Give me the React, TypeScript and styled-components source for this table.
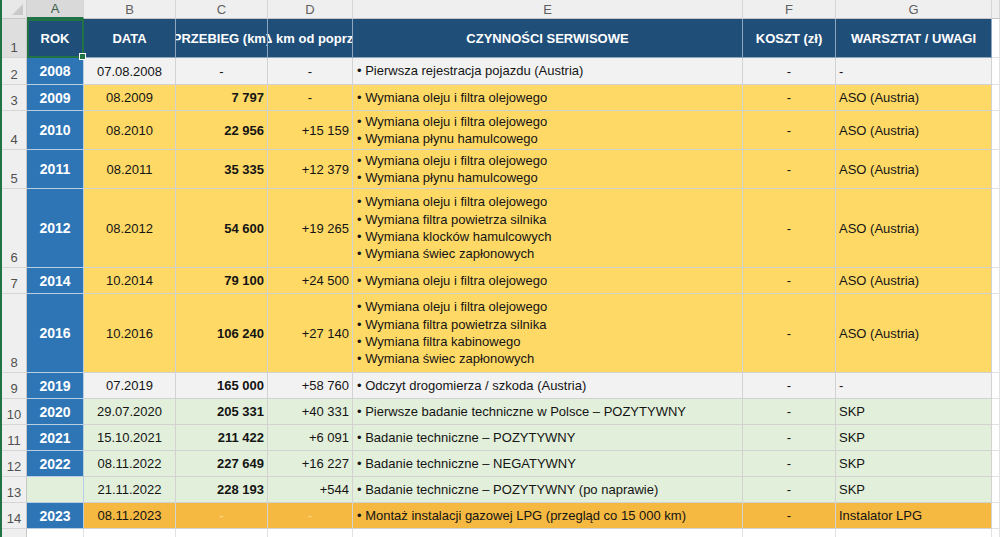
import React from 'react';
import styled, { createGlobalStyle, css } from 'styled-components';

const GlobalStyle = createGlobalStyle`
  html, body {
    margin: 0;
    padding: 0;
    background: #ffffff;
    overflow: hidden;
  }
  body {
    font-family: "Liberation Sans", Arial, sans-serif;
    font-size: 13px;
    color: #141414;
  }
`;

type Tone = 'gray' | 'yellow' | 'green' | 'orange' | 'white';

const toneBg: Record<Tone, string> = {
  gray: '#f2f2f2',
  yellow: '#ffd966',
  green: '#e2efda',
  orange: '#f5b942',
  white: '#ffffff',
};

const Sheet = styled.div`
  display: flex;
  flex-direction: column;
  width: 1000px;
  height: 537px;
  overflow: hidden;
  border-left: 2px solid #217346;
  box-sizing: border-box;
`;

const Row = styled.div<{ $h: number }>`
  display: grid;
  grid-template-columns: 25px 57px 92px 92px 85px 390px 93px 156px 1fr;
  height: ${(p) => p.$h}px;
  flex-shrink: 0;
`;

const Corner = styled.div`
  position: relative;
  background: #e8e8e8;
  border-right: 1px solid #d0d0d0;
  border-bottom: 1px solid #c6c6c6;
  &::after {
    content: '';
    position: absolute;
    right: 3px;
    bottom: 3px;
    border-style: solid;
    border-width: 0 0 11px 11px;
    border-color: transparent transparent #c9c9c9 transparent;
  }
`;

const ColLetter = styled.div<{ $active?: boolean }>`
  display: flex;
  align-items: center;
  justify-content: center;
  background: ${(p) => (p.$active ? '#d9d9d9' : '#efefef')};
  color: ${(p) => (p.$active ? '#3b5e48' : '#5f5f5f')};
  border-right: 1px solid #d6d6d6;
  border-bottom: ${(p) => (p.$active ? '2px solid #217346' : '1px solid #c6c6c6')};
  box-sizing: border-box;
  font-size: 13px;
`;

const RowNum = styled.div<{ $active?: boolean }>`
  display: flex;
  align-items: flex-end;
  justify-content: center;
  padding-bottom: 2px;
  box-sizing: border-box;
  background: ${(p) => (p.$active ? '#dedede' : '#efefef')};
  color: #505050;
  border-bottom: 1px solid #d6d6d6;
  border-right: 1px solid #c6c6c6;
  font-size: 13px;
`;

const cellBase = css`
  display: flex;
  align-items: center;
  box-sizing: border-box;
  border-right: 1px solid #d2d2d2;
  border-bottom: 1px solid #d2d2d2;
  overflow: hidden;
  white-space: nowrap;
  min-width: 0;
`;

const HeadCell = styled.div<{ $selected?: boolean }>`
  ${cellBase};
  position: relative;
  justify-content: center;
  background: #1f4e79;
  color: #ffffff;
  font-weight: bold;
  font-size: 13px;
  border-right-color: #8fa6bf;
  border-bottom-color: #8fa6bf;
  overflow: ${(p) => (p.$selected ? 'visible' : 'hidden')};
  ${(p) =>
    p.$selected &&
    css`
      outline: 2px solid #217346;
      outline-offset: -2px;
      &::after {
        content: '';
        position: absolute;
        right: -3px;
        bottom: -3px;
        width: 5px;
        height: 5px;
        background: #217346;
        border: 1px solid #ffffff;
        z-index: 2;
      }
    `}
`;

const YearCell = styled.div<{ $tone: Tone; $empty?: boolean }>`
  ${cellBase};
  justify-content: center;
  background: ${(p) => (p.$empty ? toneBg[p.$tone] : '#2e75b6')};
  color: #ffffff;
  font-weight: bold;
  font-size: 14px;
  border-right-color: #b9cde3;
  border-bottom-color: #b9cde3;
`;

const Cell = styled.div<{ $tone: Tone; $align?: 'left' | 'center' | 'right'; $bold?: boolean; $faint?: boolean }>`
  ${cellBase};
  background: ${(p) => toneBg[p.$tone]};
  justify-content: ${(p) =>
    p.$align === 'right' ? 'flex-end' : p.$align === 'center' ? 'center' : 'flex-start'};
  padding: 0 3px;
  font-weight: ${(p) => (p.$bold ? 'bold' : 'normal')};
  color: ${(p) => (p.$faint ? '#f9d991' : '#141414')};
  font-size: 13px;
`;

const ItemList = styled.div<{ $tone: Tone }>`
  ${cellBase};
  flex-direction: column;
  align-items: flex-start;
  justify-content: center;
  background: ${(p) => toneBg[p.$tone]};
  padding: 0 4px;
  font-size: 13px;
  line-height: 17.4px;
`;

const BlankCell = styled.div`
  ${cellBase};
  background: #ffffff;
  border-right-color: #e1e1e1;
  border-bottom-color: #e1e1e1;
`;

interface Entry {
  n: number;
  h: number;
  year: string;
  date: string;
  km: string;
  delta: string;
  items: string[];
  cost: string;
  note: string;
  tone: Tone;
}

const oil = 'Wymiana oleju i filtra olejowego';
const brake = 'Wymiana płynu hamulcowego';
const air = 'Wymiana filtra powietrza silnika';
const plugs = 'Wymiana świec zapłonowych';

const entries: Entry[] = [
  { n: 2, h: 27, year: '2008', date: '07.08.2008', km: '-', delta: '-', items: ['Pierwsza rejestracja pojazdu (Austria)'], cost: '-', note: '-', tone: 'gray' },
  { n: 3, h: 26, year: '2009', date: '08.2009', km: '7 797', delta: '-', items: [oil], cost: '-', note: 'ASO (Austria)', tone: 'yellow' },
  { n: 4, h: 39, year: '2010', date: '08.2010', km: '22 956', delta: '+15 159', items: [oil, brake], cost: '-', note: 'ASO (Austria)', tone: 'yellow' },
  { n: 5, h: 39, year: '2011', date: '08.2011', km: '35 335', delta: '+12 379', items: [oil, brake], cost: '-', note: 'ASO (Austria)', tone: 'yellow' },
  { n: 6, h: 79, year: '2012', date: '08.2012', km: '54 600', delta: '+19 265', items: [oil, air, 'Wymiana klocków hamulcowych', plugs], cost: '-', note: 'ASO (Austria)', tone: 'yellow' },
  { n: 7, h: 26, year: '2014', date: '10.2014', km: '79 100', delta: '+24 500', items: [oil], cost: '-', note: 'ASO (Austria)', tone: 'yellow' },
  { n: 8, h: 79, year: '2016', date: '10.2016', km: '106 240', delta: '+27 140', items: [oil, air, 'Wymiana filtra kabinowego', plugs], cost: '-', note: 'ASO (Austria)', tone: 'yellow' },
  { n: 9, h: 26, year: '2019', date: '07.2019', km: '165 000', delta: '+58 760', items: ['Odczyt drogomierza / szkoda (Austria)'], cost: '-', note: '-', tone: 'gray' },
  { n: 10, h: 26, year: '2020', date: '29.07.2020', km: '205 331', delta: '+40 331', items: ['Pierwsze badanie techniczne w Polsce – POZYTYWNY'], cost: '-', note: 'SKP', tone: 'green' },
  { n: 11, h: 26, year: '2021', date: '15.10.2021', km: '211 422', delta: '+6 091', items: ['Badanie techniczne – POZYTYWNY'], cost: '-', note: 'SKP', tone: 'green' },
  { n: 12, h: 26, year: '2022', date: '08.11.2022', km: '227 649', delta: '+16 227', items: ['Badanie techniczne – NEGATYWNY'], cost: '-', note: 'SKP', tone: 'green' },
  { n: 13, h: 26, year: '', date: '21.11.2022', km: '228 193', delta: '+544', items: ['Badanie techniczne – POZYTYWNY (po naprawie)'], cost: '-', note: 'SKP', tone: 'green' },
  { n: 14, h: 26, year: '2023', date: '08.11.2023', km: '-', delta: '-', items: ['Montaż instalacji gazowej LPG (przegląd co 15 000 km)'], cost: '-', note: 'Instalator LPG', tone: 'orange' },
];

const letters = ['A', 'B', 'C', 'D', 'E', 'F', 'G', ''];
const headers = ['ROK', 'DATA', 'PRZEBIEG (km)', 'Δ km od poprz.', 'CZYNNOŚCI SERWISOWE', 'KOSZT (zł)', 'WARSZTAT / UWAGI'];

const EntryRow: React.FC<{ e: Entry }> = ({ e }) => {
  const dash = (v: string) => v === '-';
  return (
    <Row $h={e.h}>
      <RowNum>{e.n}</RowNum>
      <YearCell $tone={e.tone} $empty={!e.year}>{e.year}</YearCell>
      <Cell $tone={e.tone} $align="center">{e.date}</Cell>
      <Cell $tone={e.tone} $align={dash(e.km) ? 'center' : 'right'} $bold={!dash(e.km)} $faint={e.tone === 'orange' && dash(e.km)}>
        {e.km}
      </Cell>
      <Cell $tone={e.tone} $align={dash(e.delta) ? 'center' : 'right'} $faint={e.tone === 'orange' && dash(e.delta)}>
        {e.delta}
      </Cell>
      <ItemList $tone={e.tone}>
        {e.items.map((it) => (
          <span key={it}>• {it}</span>
        ))}
      </ItemList>
      <Cell $tone={e.tone} $align="center">{e.cost}</Cell>
      <Cell $tone={e.tone}>{e.note}</Cell>
      <BlankCell />
    </Row>
  );
};

export default function App() {
  return (
    <>
      <GlobalStyle />
      <Sheet>
        <Row $h={19}>
          <Corner />
          {letters.map((l, i) => (
            <ColLetter key={i} $active={l === 'A'}>{l}</ColLetter>
          ))}
        </Row>
        <Row $h={39}>
          <RowNum $active>1</RowNum>
          {headers.map((h, i) => (
            <HeadCell key={h} $selected={i === 0}>{h}</HeadCell>
          ))}
          <BlankCell />
        </Row>
        {entries.map((e) => (
          <EntryRow key={e.n} e={e} />
        ))}
        <Row $h={26}>
          <RowNum />
          {letters.map((_, i) => (
            <BlankCell key={i} />
          ))}
        </Row>
      </Sheet>
    </>
  );
}
